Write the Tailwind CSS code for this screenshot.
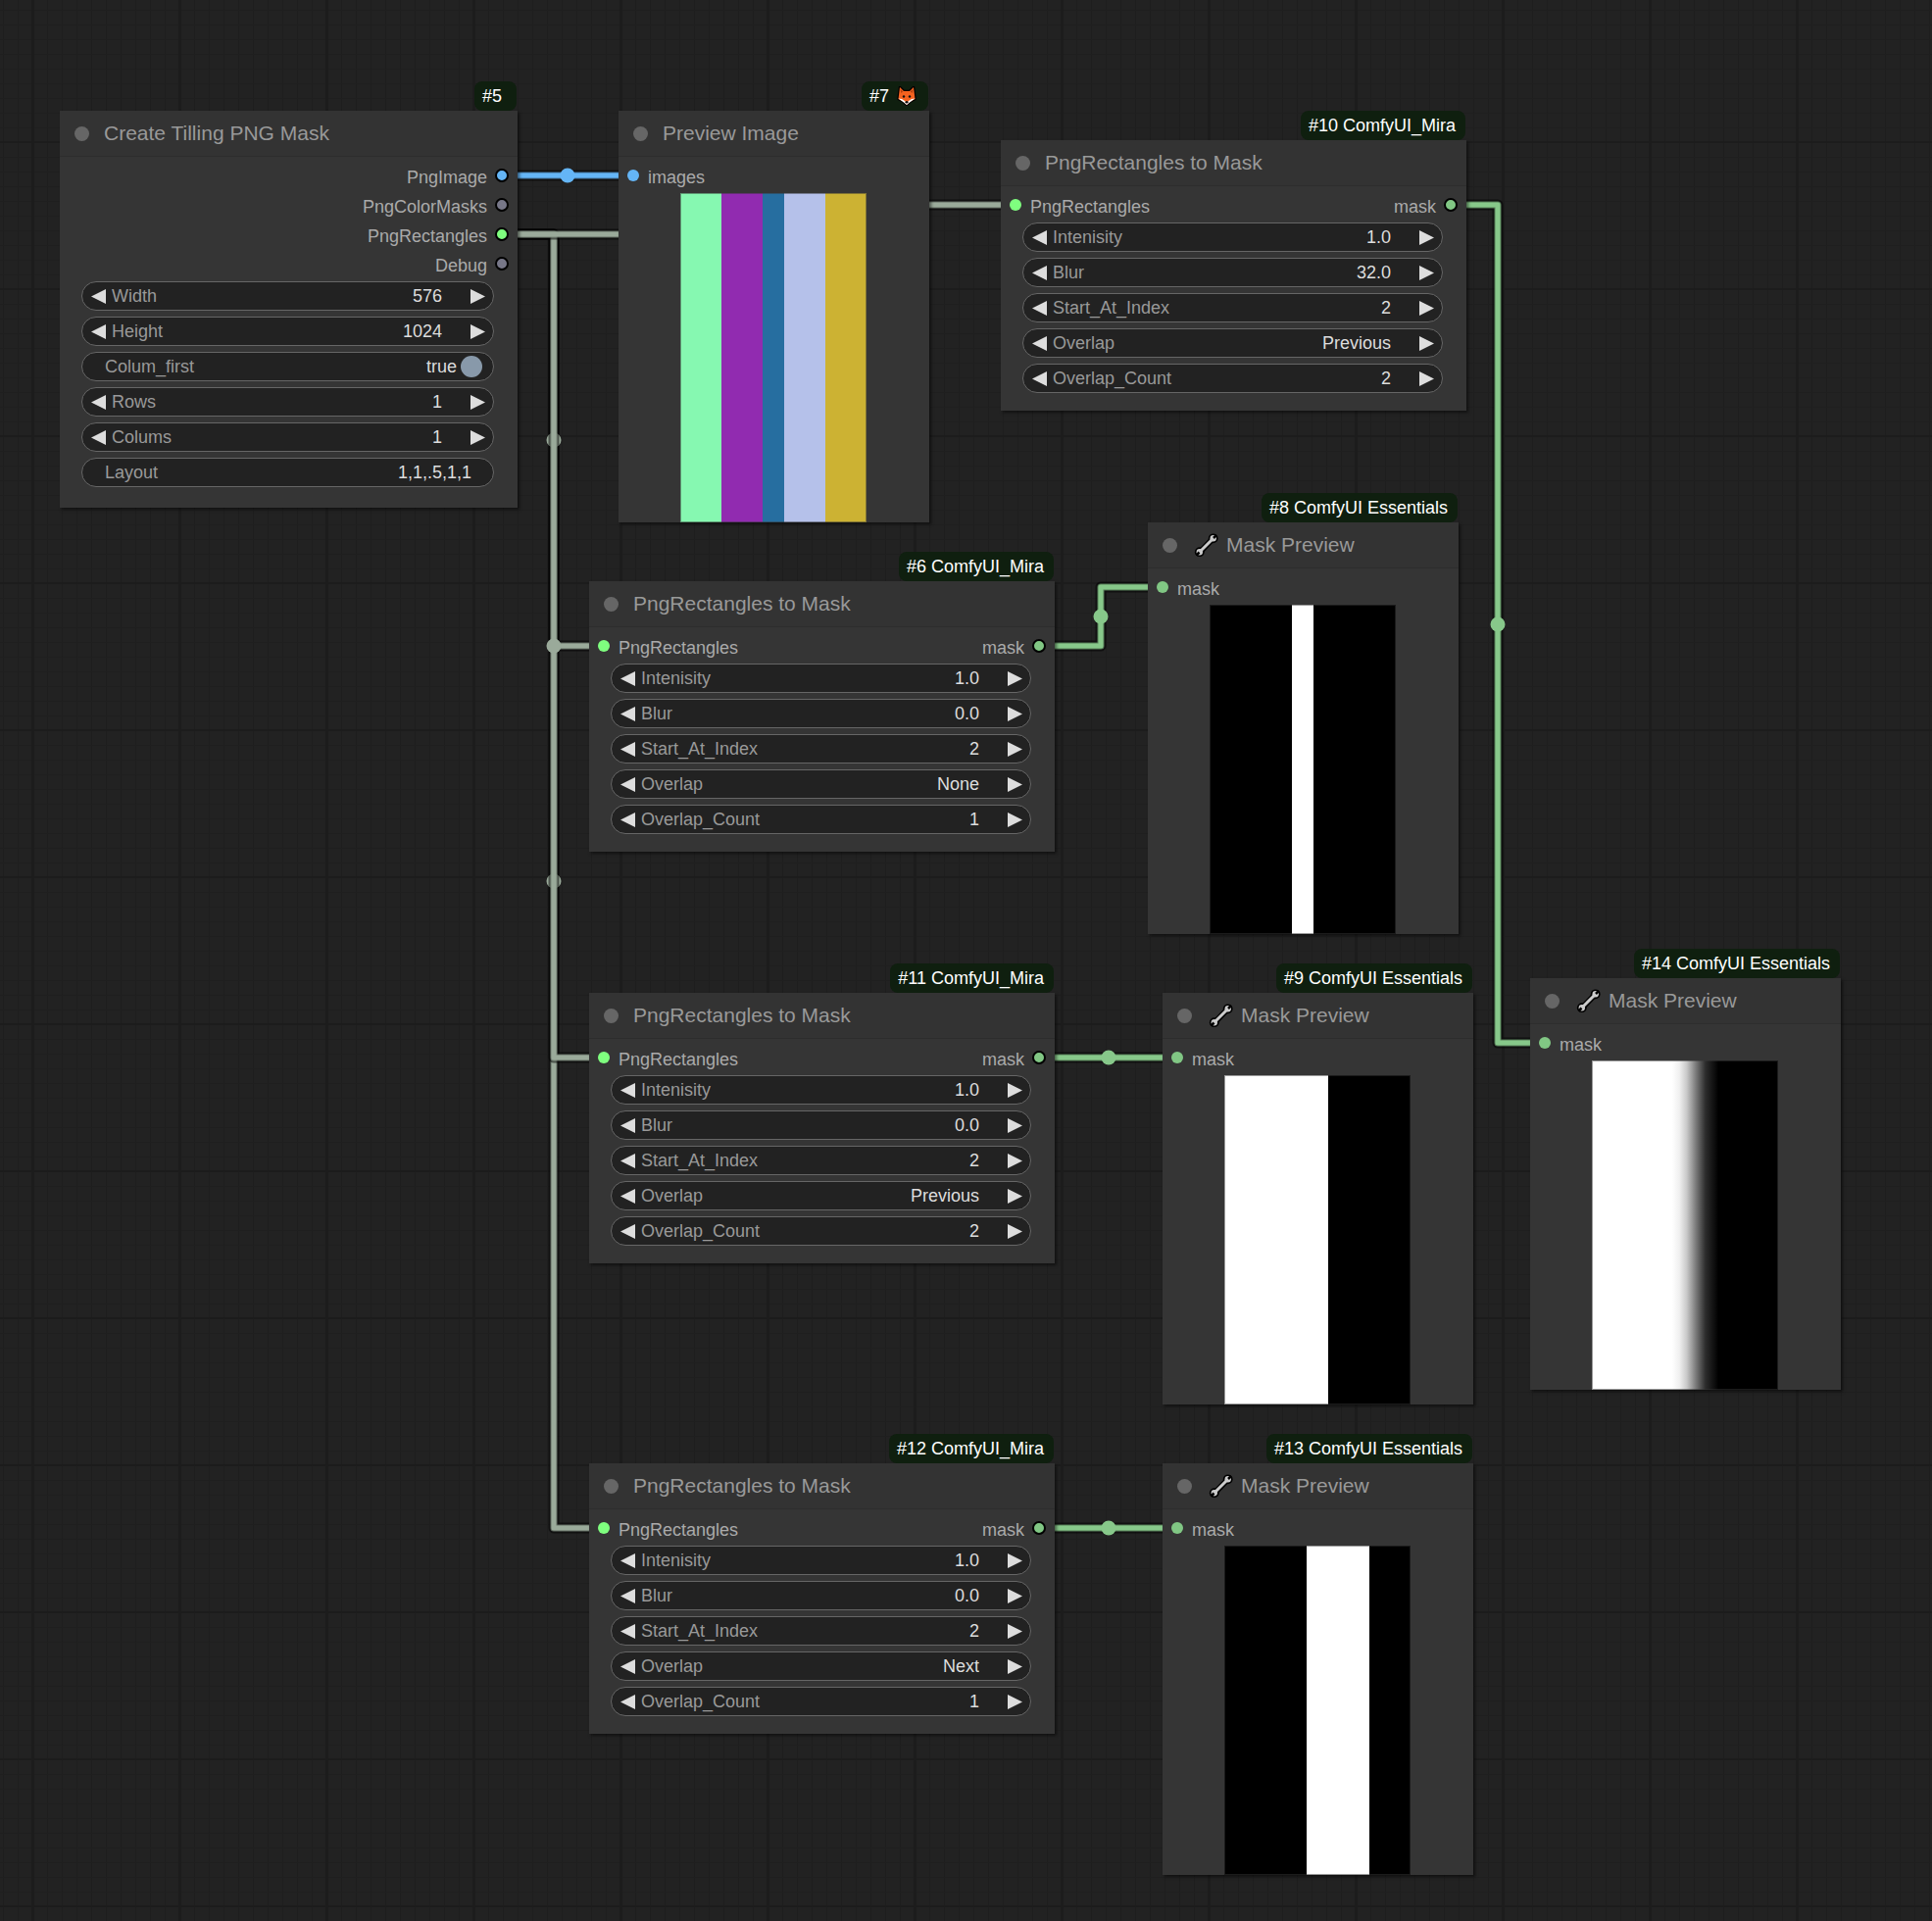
<!DOCTYPE html>
<html lang="en">
<head>
<meta charset="utf-8">
<meta name="viewport" content="width=device-width, initial-scale=1">
<title>Mask workflow</title>
<script src="https://cdn.jsdelivr.net/npm/@tailwindcss/browser@4"></script>
</head>
<body class="bg-[#222222] font-['Liberation_Sans',Arial,sans-serif] text-lg leading-5">
<main class="relative min-h-screen w-full overflow-hidden">
  <!-- grid and links -->
  <svg class="pointer-events-none absolute inset-0 h-full w-full overflow-visible" aria-hidden="true">
    <defs>
      <pattern id="fine" width="15" height="15" x="3" y="10" patternUnits="userSpaceOnUse">
        <path d="M0.5 0V15" stroke="#1e1e1e" stroke-width="1"/>
        <path d="M0 0.5H15" stroke="#1f1f1f" stroke-width="1"/>
      </pattern>
      <pattern id="major" width="150" height="150" x="32" y="143" patternUnits="userSpaceOnUse">
        <path d="M1.5 0V150" stroke="#1c1c1c" stroke-width="3"/>
        <path d="M0 2H150" stroke="#1c1c1c" stroke-width="2"/>
      </pattern>
    </defs>
    <rect width="100%" height="100%" fill="url(#fine)"/>
    <rect width="100%" height="100%" fill="url(#major)"/>
    <g id="links" fill="none" stroke-linejoin="round"></g>
  </svg>
  <div id="nodes"></div>
</main>

<template id="wrench">
  <svg class="mr-[5px] h-[30px] w-[30px] shrink-0" viewBox="0 0 30 30" fill="none" aria-hidden="true">
    <path d="M8 22.500 L21.500 8.500" stroke="#000" stroke-width="6"/>
    <circle cx="21.700" cy="8.300" r="4.900" fill="#000"/><circle cx="7.800" cy="22.200" r="4.900" fill="#000"/>
    <path d="M8.500 21.500 L21 9" stroke="#ccc" stroke-width="3"/>
    <circle cx="21.700" cy="8.300" r="3.200" fill="#ccc"/><circle cx="7.800" cy="22.200" r="3.200" fill="#ccc"/>
    <path d="M22 8 L25 5 M7.500 22.500 L4.500 25.500" stroke="#000" stroke-width="2.500"/>
  </svg>
</template>
<template id="fox">
  <svg class="ml-[8px] mr-[2px] h-5 w-5 shrink-0" viewBox="0 0 20 20" role="img" aria-label="fox">
    <path d="M3 1 L7 5 H13 L17 1 L18 9 L18.500 13 L13 16 L10 19 L7 16 L1.500 13 L2 9 Z" fill="#000" stroke="#000" stroke-width="2.500" stroke-linejoin="round"/>
    <path d="M3 1 L7 5 H13 L17 1 L18 9 L18.500 13 L13 16 L10 19 L7 16 L1.500 13 L2 9 Z" fill="#f4621f"/>
    <path d="M1.500 12.500 L5 13 L8 15 L10 17 L12 15 L15 13 L18.500 12.500 L13 16.500 L10 19 L7 16.500 Z" fill="#fff"/>
    <path d="M3.500 3 L4.500 7 L6 5.500 Z M16.500 3 L15.500 7 L14 5.500 Z" fill="#a63c10"/>
    <circle cx="7" cy="10.500" r="1.200" fill="#111"/><circle cx="13" cy="10.500" r="1.200" fill="#111"/><ellipse cx="10" cy="16.300" rx="1.500" ry="1.200" fill="#111"/>
  </svg>
</template>

<script>
const num = (label, value) => ({ kind: 'number', label, value });
const combo = (label, value) => ({ kind: 'combo', label, value });
const maskWidgets = (blur, overlap, count) => [
  num('Intenisity', '1.0'), num('Blur', blur), num('Start_At_Index', '2'),
  combo('Overlap', overlap), num('Overlap_Count', count),
];
const LIME = 'bg-[#7fff7f]', GREEN = 'bg-[#81c784]', BLUE = 'bg-[#64b5f6]', GREY = 'bg-[#777788]';
const rectIO = { inputs: [['PngRectangles', LIME]], outputs: [['mask', GREEN]], pad: 'pb-[18px]', width: 475, title: 'PngRectangles to Mask' };
const preview = { inputs: [['mask', GREEN]], outputs: [], widgets: [], width: 317, title: 'Mask Preview', wrench: true };
const K = 'bg-black', W = 'bg-white';

const nodes = [
  { id: 5, x: 61, y: 113, width: 467, badge: '#5 ', title: 'Create Tilling PNG Mask', pad: 'pb-[21px]', inputs: [],
    outputs: [['PngImage', BLUE], ['PngColorMasks', GREY], ['PngRectangles', LIME], ['Debug', GREY]],
    widgets: [num('Width', '576'), num('Height', '1024'), { kind: 'toggle', label: 'Colum_first' },
      num('Rows', '1'), num('Colums', '1'), { kind: 'text', label: 'Layout', value: '1,1,.5,1,1' }] },
  { id: 7, x: 631, y: 113, width: 317, badge: '#7', fox: true, title: 'Preview Image', inputs: [['images', BLUE]], outputs: [], widgets: [],
    bands: [[2, 'bg-[#86f8b1]'], [2, 'bg-[#912bb0]'], [1, 'bg-[#266ea0]'], [2, 'bg-[#b5c1ea]'], [2, 'bg-[#ccb233]']] },
  { ...rectIO, id: 10, x: 1021, y: 143, badge: '#10 ComfyUI_Mira', widgets: maskWidgets('32.0', 'Previous', '2') },
  { ...preview, id: 8, x: 1171, y: 533, badge: '#8 ComfyUI Essentials', bands: [[4, K], [1, W], [4, K]] },
  { ...rectIO, id: 6, x: 601, y: 593, badge: '#6 ComfyUI_Mira', widgets: maskWidgets('0.0', 'None', '1') },
  { ...rectIO, id: 11, x: 601, y: 1013, badge: '#11 ComfyUI_Mira', widgets: maskWidgets('0.0', 'Previous', '2') },
  { ...preview, id: 9, x: 1186, y: 1013, badge: '#9 ComfyUI Essentials', bands: [[5, W], [4, K]] },
  { ...rectIO, id: 12, x: 601, y: 1493, badge: '#12 ComfyUI_Mira', widgets: maskWidgets('0.0', 'Next', '1') },
  { ...preview, id: 13, x: 1186, y: 1493, badge: '#13 ComfyUI Essentials', bands: [[4, K], [3, W], [2, K]] },
  { ...preview, id: 14, x: 1561, y: 998, badge: '#14 ComfyUI Essentials',
    bands: [[1, 'bg-[linear-gradient(to_right,#fff_43%,#f0f0f0_47%,#c8c8c8_51%,#787878_56%,#2c2c2c_61%,#000_68%)]']] },
];

// [color, path, marker x, marker y]
const links = [
  ['#64b5f6', 'M513 179H646', 579, 179],
  ['#9aaa9a', 'M513 239H565V1559H616', 565, 899],
  ['#9aaa9a', 'M513 239H565V659H616', 565, 449],
  ['#9aaa9a', 'M513 239H565V1079H616', 565, 659],
  ['#9aaa9a', 'M513 239H775V209H1036', 775, 224],
  ['#87c88a', 'M1061 659H1123V599H1186', 1123, 629],
  ['#87c88a', 'M1061 1079H1201', 1131, 1079],
  ['#87c88a', 'M1061 1559H1201', 1131, 1559],
  ['#87c88a', 'M1481 209H1528V1064H1576', 1528, 637],
];
document.getElementById('links').innerHTML = links.map(([c, d, x, y]) => `
  <path d="${d}" stroke="#000" stroke-opacity="0.5" stroke-width="11"/>
  <path d="${d}" stroke="${c}" stroke-opacity="0.6" stroke-width="7"/>
  <path d="${d}" stroke="${c}" stroke-width="5"/>
  <circle cx="${x}" cy="${y}" r="7.5" fill="${c}"/>`).join('');

const leftArrow = '<svg class="block h-[15px] w-[15px]" viewBox="0 0 15 15" aria-hidden="true"><path d="M15 0V15L0 7.500Z" fill="#ddd"/></svg>';
const rightArrow = '<svg class="block h-[15px] w-[15px]" viewBox="0 0 15 15" aria-hidden="true"><path d="M0 0V15L15 7.500Z" fill="#ddd"/></svg>';
const icon = id => document.getElementById(id).innerHTML.trim();
const PILL = 'flex h-[30px] items-center rounded-full border border-[#666] bg-[#222]';
const LABEL = 'shrink-0 text-[#999]';

function widget(w, id) {
  const f = `n${id}-${w.label.toLowerCase()}`;
  if (w.kind === 'toggle') return `<div class="${PILL} pl-[23px] pr-[11px]">
    <label for="${f}" class="${LABEL}">${w.label}</label>
    <span class="flex-1 pr-1 text-right text-[#ddd]">true</span>
    <input id="${f}" type="checkbox" checked class="h-[22px] w-[22px] appearance-none rounded-full bg-[#8899aa]"></div>`;
  if (w.kind === 'text') return `<div class="${PILL} pl-[23px] pr-[22px]">
    <label for="${f}" class="${LABEL}">${w.label}</label>
    <input id="${f}" type="text" value="${w.value}" class="h-6 min-w-0 flex-1 text-right text-[#ddd]"></div>`;
  const field = w.kind === 'combo'
    ? `<select id="${f}" class="h-6 min-w-0 flex-1 appearance-none text-right text-[#ddd] [text-align-last:right]"><option>${w.value}</option></select>`
    : `<input id="${f}" type="text" inputmode="decimal" value="${w.value}" class="h-6 min-w-0 flex-1 text-right text-[#ddd]">`;
  return `<div class="${PILL} pl-[9px] pr-[8px]">
    <button type="button" aria-label="Previous ${w.label}" class="mr-[6px]">${leftArrow}</button>
    <label for="${f}" class="${LABEL}">${w.label}</label>${field}
    <button type="button" aria-label="Next ${w.label}" class="ml-[29px]">${rightArrow}</button></div>`;
}

function node(n) {
  const ins = n.inputs.map(([t, c]) => `<li class="flex h-[30px] items-center gap-[9px]"><span class="h-3 w-3 rounded-full ${c}"></span><span class="pt-[3px]">${t}</span></li>`).join('');
  const outs = n.outputs.map(([t, c]) => `<li class="flex h-[30px] items-center justify-end gap-[8px]"><span class="pt-[3px]">${t}</span><span class="h-[14px] w-[14px] rounded-full border-2 border-black ${c}"></span></li>`).join('');
  const image = n.bands ? `<div class="ml-[63px] mt-[3px] flex h-[336px] w-[190px] outline-1 -outline-offset-1 outline-[#353535]/50" role="img" aria-label="${n.title}">${n.bands.map(([g, c]) => `<div class="${c}" style="flex-grow:${g}"></div>`).join('')}</div>` : '';
  const widgets = n.widgets.length ? `<div class="mt-[3px] flex flex-col gap-[6px] pl-[22px] pr-[24px] ${n.pad}">${n.widgets.map(w => widget(w, n.id)).join('')}</div>` : '';
  return `<section class="absolute bg-[#353535] shadow-[2px_2px_3px_rgba(0,0,0,0.5)]" style="left:${n.x}px;top:${n.y}px;width:${n.width}px">
    <div class="absolute right-px bottom-full flex h-[30px] items-center whitespace-pre rounded-lg bg-[#0f1f0f] pl-[8px] pr-[10px] text-white">${n.badge}${n.fox ? icon('fox') : ''}</div>
    <header class="flex h-[47px] items-center border-b border-[#2d2d2d] bg-[#333] pl-[15px]">
      <span class="mr-[15px] h-[15px] w-[15px] rounded-full bg-[#666]"></span>
      ${n.wrench ? icon('wrench') : ''}<h2 class="text-[21px] leading-6 text-[#999]">${n.title}</h2>
    </header>
    <div class="flex justify-between px-[9px] pt-[4px] text-[#aaa]"><ul>${ins}</ul><ul>${outs}</ul></div>
    ${image}${widgets}
  </section>`;
}
document.getElementById('nodes').innerHTML = nodes.map(node).join('');
</script>
</body>
</html>
